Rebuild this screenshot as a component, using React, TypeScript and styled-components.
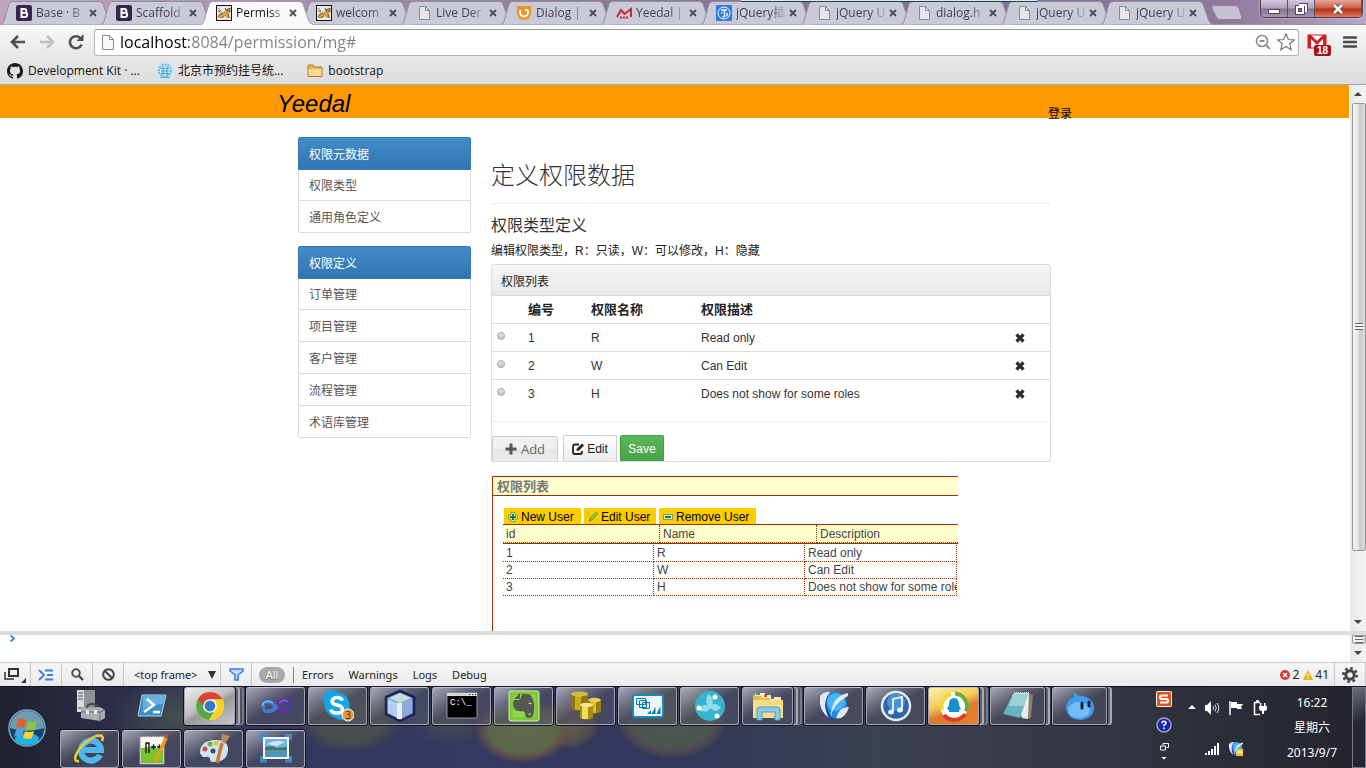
import React from "react";
import styled, { createGlobalStyle, css } from "styled-components";

const ui = `"Open Sans", "Noto Sans CJK SC", sans-serif`;
const body = `"Liberation Sans", "Noto Sans CJK SC", sans-serif`;

const GlobalStyle = createGlobalStyle`
  * { box-sizing: border-box; }
  body { margin: 0; font-family: ${body}; font-size: 12px; color: #333; background: #fff; }
  button, input, select { font: inherit; color: inherit; margin: 0; }
  button { padding: 0; border: 0; background: none; cursor: pointer; }
  a { color: inherit; text-decoration: none; }
  svg { display: block; flex: none; }
  h1, h2, p, ul { margin: 0; padding: 0; }
  ul { list-style: none; }
`;

const Screen = styled.div`
  display: flex;
  flex-direction: column;
  height: 100vh;
  overflow: hidden;
`;

/* ---------- tab strip ---------- */

const TabStrip = styled.header`
  position: relative;
  display: flex;
  flex: none;
  height: 25px;
  padding-left: 1px;
  background: linear-gradient(90deg, #c0a5c0 0, #a893ab 20%, #8d7896 45%, #836f90 70%, #8f7a9f 90%, #b9a5c6 100%);
  border-bottom: 1px solid #9a97a2;
  font-family: ${ui};
`;
const BackWindowEdge = styled.span`
  position: absolute;
  left: 741px;
  top: 0;
  width: 296px;
  height: 2px;
  background: linear-gradient(#dfe7e8 50%, #1f4650 50%);
  z-index: 4;
`;
const TabBox = styled.div<{ $active?: boolean }>`
  position: relative;
  z-index: ${(p) => (p.$active ? 3 : 1)};
  display: flex;
  align-items: center;
  flex: 0 1 100px;
  min-width: 0;
  height: 25px;
  padding: 1px 0 0 15px;
  color: ${(p) => (p.$active ? "#111" : "#45434f")};
`;
const TabShape = styled.svg`
  position: absolute;
  left: 0;
  top: 0;
  z-index: -1;
`;
const TabButton = styled.button`
  display: flex;
  align-items: center;
  gap: 4px;
  font-size: 12px;
  line-height: 20px;
`;
const TabTitle = styled.span`
  width: 51px;
  overflow: hidden;
  white-space: nowrap;
  text-align: left;
  mask-image: linear-gradient(90deg, #000 34px, transparent 52px);
`;
const CloseTab = styled.button`
  margin-left: 2px;
  width: 8px;
  height: 8px;
`;
const NewTab = styled.button`
  width: 32px;
  height: 16px;
  margin: 5px 0 0 10px;
`;
const WindowControls = styled.div`
  display: flex;
  height: 18px;
  margin: 0 3px 0 auto;
  border: 1px solid #4a4058;
  border-top: 0;
  border-radius: 0 0 5px 5px;
  overflow: hidden;
  box-shadow: 0 0 2px #ffffffaa;
`;
const WindowButton = styled.button<{ $close?: boolean }>`
  display: flex;
  align-items: center;
  justify-content: center;
  width: ${(p) => (p.$close ? 47 : 27)}px;
  border-right: 1px solid #5d526b;
  background: ${(p) =>
    p.$close
      ? "linear-gradient(#e3a797 0, #cf5a43 48%, #b42d16 52%, #dd7a58 100%)"
      : "linear-gradient(#d6c9dc 0, #b1a0bb 48%, #85738f 52%, #a595b0 100%)"};
`;

/* ---------- toolbar ---------- */

const Toolbar = styled.div`
  display: flex;
  align-items: center;
  flex: none;
  height: 34px;
  padding: 0 7px 0 8px;
  background: linear-gradient(#f9f9f9, #e6e6e6);
`;
const ToolButton = styled.button<{ $w: number }>`
  display: flex;
  align-items: center;
  justify-content: center;
  width: ${(p) => p.$w}px;
  height: 26px;
`;
const Omnibox = styled.div`
  display: flex;
  align-items: center;
  flex: 1;
  height: 27px;
  margin-left: 1px;
  padding: 0 3px 0 7px;
  gap: 6px;
  background: #fff;
  border: 1px solid #b5b5b5;
  border-top-color: #9c9c9c;
  border-radius: 3px;
`;
const UrlInput = styled.input`
  flex: 1;
  min-width: 0;
  height: 24px;
  padding: 0;
  border: 0;
  outline: 0;
  font-family: ${ui};
  font-size: 16px;
  color: #808080;
  background: linear-gradient(90deg, #000 69px, #808080 69px);
  background-clip: text;
  -webkit-text-fill-color: transparent;
`;
const Gmail = styled.button`
  display: flex;
  margin: 6px 8px 0;
`;
const Bookmarks = styled.nav`
  display: flex;
  align-items: center;
  flex: none;
  height: 26px;
  gap: 17px;
  padding: 0 7px 2px;
  background: linear-gradient(#e6e6e6, #dcdcdc);
  border-bottom: 1px solid #a5a5a5;
  font-family: ${ui};
  color: #111;
`;
const Bookmark = styled.a<{ $gap?: boolean }>`
  display: flex;
  align-items: center;
  gap: 5px;
  margin-left: ${(p) => (p.$gap ? 7 : 0)}px;
  line-height: 20px;
`;

/* ---------- page ---------- */

const Viewport = styled.div`
  display: flex;
  flex: 1;
  min-height: 0;
`;
const Page = styled.div`
  flex: 1;
  min-width: 0;
  overflow: hidden;
`;
const Banner = styled.div`
  height: 33px;
  background: #f90;
`;
const BannerInner = styled.div`
  display: flex;
  justify-content: space-between;
  max-width: 795px;
  margin: 0 auto;
  color: #000;
`;
const Brand = styled.a`
  font-size: 24px;
  font-style: italic;
  line-height: 37px;
`;
const Login = styled.a`
  line-height: 18px;
  padding-top: 20px;
`;
const Container = styled.div`
  display: flex;
  gap: 20px;
  max-width: 753px;
  margin: 0 auto;
  padding-top: 19px;
`;
const Sidebar = styled.nav`
  flex: 0 0 173px;
`;
const MenuGroup = styled.ul`
  margin-bottom: 13px;
`;
const MenuHead = styled.li`
  position: relative;
  height: 33px;
  padding: 0 10px;
  line-height: 34px;
  color: #fff;
  background: linear-gradient(#428bca, #3276b1);
  border: 1px solid #3278b3;
  border-radius: 2px 2px 0 0;
  margin-bottom: -1px;
`;
const MenuItem = styled.li`
  height: 32px;
  padding: 0 10px;
  line-height: 34px;
  color: #555;
  border: solid #ddd;
  border-width: 0 1px 1px;
  &:last-child {
    border-radius: 0 0 2px 2px;
  }
`;
const Main = styled.main`
  flex: 1;
  min-width: 0;
`;
const Title = styled.h1`
  padding: 20px 0 9px;
  font-size: 24px;
  font-weight: 300;
  line-height: 37px;
  border-bottom: 1px solid #eee;
`;
const Subtitle = styled.h2`
  padding-top: 10px;
  font-size: 16px;
  font-weight: 400;
  line-height: 24px;
`;
const Hint = styled.p`
  line-height: 20px;
  margin: 3px 0;
  color: #222;
`;
const Panel = styled.section`
  border: 1px solid #ddd;
  border-radius: 2px;
`;
const PanelHead = styled.div`
  height: 31px;
  padding: 0 9px;
  line-height: 35px;
  color: #222;
  background: linear-gradient(#f5f5f5, #e8e8e8);
  border-bottom: 1px solid #ddd;
`;
const RoleTable = styled.table`
  width: 100%;
  table-layout: fixed;
  border-collapse: collapse;
  th,
  td {
    height: 28px;
    padding: 2px 5px 0;
    text-align: left;
    line-height: 18px;
  }
  th {
    height: 27px;
    font-size: 13px;
    color: #222;
  }
  tbody tr {
    border-top: 1px solid #ddd;
  }
`;
const Col = styled.col<{ $w?: number }>`
  width: ${(p) => (p.$w ? `${p.$w}px` : "auto")};
`;
const Radio = styled.input`
  display: block;
  appearance: none;
  width: 8px;
  height: 8px;
  border: 1px solid #aaa;
  border-radius: 50%;
  background: linear-gradient(#e6e6e6, #c4c4c4);
  margin-bottom: 4px;
`;
const DeleteButton = styled.button`
  display: block;
`;
const PanelFoot = styled.div`
  display: flex;
  align-items: flex-end;
  gap: 3px;
  height: 40px;
  margin-top: 14px;
  border-top: 1px solid #eee;
`;
const Button = styled.button<{ $kind?: "add" | "save" }>`
  display: flex;
  align-items: center;
  justify-content: center;
  gap: 3px;
  height: 26px;
  width: 54px;
  border: 1px solid #ccc;
  border-bottom: 0;
  border-radius: 2px 2px 0 0;
  color: #222;
  background: linear-gradient(#fff, #ebebeb);
  ${(p) =>
    p.$kind === "add" &&
    css`
      width: 66px;
      height: 25px;
      gap: 4px;
      margin-right: 2px;
      font-family: ${ui};
      font-size: 13px;
      color: #666;
      background: linear-gradient(#f0f0f0 50%, #e6e6e6 50%, #ececec);
    `}
  ${(p) =>
    p.$kind === "save" &&
    css`
      width: 44px;
      color: #fff;
      border-color: #449d44;
      background: linear-gradient(#5cb85c, #47a147);
    `}
`;

const GridPanel = styled.section`
  max-width: 466px;
  height: 300px;
  margin: 14px 0 0 1px;
  overflow: hidden;
  border: solid #930;
  border-width: 1px 0 0 1px;
`;
const GridTitle = styled.h2`
  height: 19px;
  padding-left: 4px;
  font-size: 13px;
  font-weight: 700;
  line-height: 19px;
  color: #777;
  background: #ffc;
  border-bottom: 1px solid #930;
`;
const GridInner = styled.div`
  padding: 12px 0 0 10px;
`;
const GridToolbar = styled.div`
  display: flex;
  gap: 3px;
  padding-left: 1px;
`;
const GridButton = styled.button<{ $w: number }>`
  display: flex;
  align-items: center;
  gap: 3px;
  width: ${(p) => p.$w}px;
  height: 16px;
  padding: 1px 0 0 4px;
  color: #000;
  background: #fc0;
  white-space: nowrap;
`;
const GridHeadTable = styled.table`
  width: 471px;
  margin-bottom: 1px;
  table-layout: fixed;
  border-collapse: separate;
  border-spacing: 0;
  background: #ffc;
  border: solid #930;
  border-width: 1px 0;
  th {
    height: 18px;
    padding: 0 3px;
    font-weight: 400;
    text-align: left;
    line-height: 16px;
    color: #444;
    border: dotted #930;
    border-width: 0 1px 1px 0;
  }
`;
const GridBodyTable = styled.table`
  width: 454px;
  table-layout: fixed;
  border-collapse: separate;
  border-spacing: 0;
  td {
    height: 17px;
    padding: 0 3px;
    line-height: 16px;
    color: #444;
    white-space: nowrap;
    overflow: hidden;
    border: dotted #930;
    border-width: 0 1px 1px 0;
  }
`;

/* ---------- scrollbars ---------- */

const Scrollbar = styled.div`
  display: flex;
  flex-direction: column;
  align-items: center;
  flex: none;
  width: 17px;
  background: linear-gradient(90deg, #fff 1px, #e8e8e8 1px, #f3f3f3);
`;
const ScrollArrow = styled.span<{ $down?: boolean }>`
  display: flex;
  align-items: center;
  justify-content: center;
  height: 18px;
  &::after {
    content: "";
    border: 4px solid transparent;
    border-width: ${(p) => (p.$down ? "4px 4px 0" : "0 4px 4px")};
    border-top-color: ${(p) => (p.$down ? "#444" : "transparent")};
    border-bottom-color: ${(p) => (p.$down ? "transparent" : "#444")};
  }
`;
const Thumb = styled.span<{ $short?: boolean }>`
  display: flex;
  align-items: center;
  justify-content: center;
  width: 14px;
  margin-left: 2px;
  flex: ${(p) => (p.$short ? "0 0 9px" : "0 0 82%")};
  border: 1px solid #999;
  border-radius: ${(p) => (p.$short ? "0 0 2px 2px" : "2px")};
  background: linear-gradient(90deg, #f5f5f5, #e4e4e4 45%, #c9c9c9 55%, #dadada);
  &::after {
    content: "";
    width: 8px;
    height: 7px;
    background: repeating-linear-gradient(#666 0 1px, #f4f4f4 1px 3px);
  }
`;
const Grow = styled.span`
  flex: 1;
`;

/* ---------- console ---------- */

const Console = styled.div`
  display: flex;
  flex: none;
  height: 31px;
  border-top: 4px solid #dcdcdc;
  background: #fff;
`;
const Prompt = styled.div`
  flex: 1;
  padding-left: 10px;
`;
const ConsoleBar = styled.div`
  display: flex;
  flex: none;
  height: 24px;
  border-top: 1px solid #c8c8c8;
  background: linear-gradient(#f6f6f6, #eaeaea);
  font-family: "Noto Sans", sans-serif;
  font-size: 11px;
  color: #222;
`;
const ConsoleTool = styled.button`
  display: flex;
  align-items: center;
  justify-content: center;
  width: 31px;
  border-right: 1px solid #c8c8c8;
`;
const FrameSelect = styled.label`
  position: relative;
  display: flex;
  align-items: center;
  width: 97px;
  border-right: 1px solid #c8c8c8;
  select {
    appearance: none;
    width: 96px;
    height: 22px;
    padding: 0 0 0 10px;
    border: 0;
    background: none;
  }
  svg {
    position: absolute;
    right: 4px;
  }
`;
const Filters = styled.div`
  display: flex;
  align-items: center;
  gap: 15px;
  padding-left: 7px;
`;
const AllFilter = styled.button`
  width: 26px;
  height: 16px;
  margin-right: -7px;
  border-radius: 8px;
  line-height: 16px;
  color: #fff;
  background: #a9a9a9;
  text-shadow: 0 1px 1px #666;
`;
const FilterRule = styled.span`
  width: 1px;
  height: 16px;
  margin-right: -7px;
  background: #888;
`;
const Counts = styled.div`
  display: flex;
  align-items: center;
  gap: 2px;
  margin-left: auto;
  padding-right: 5px;
  font-size: 12px;
  border-right: 1px solid #c8c8c8;
`;
const CountText = styled.span`
  margin-right: 2px;
  &:last-child { margin-right: 0; }
`;

/* ---------- taskbar ---------- */

const Taskbar = styled.footer`
  display: flex;
  flex: none;
  height: 82px;
  border-top: 1px solid #15151f;
  color: #fff;
  background:
    radial-gradient(ellipse 48px 32px at 523px 44px, #5f6b4b 0, #5c6649 70%, #6b5148aa 86%, transparent 100%),
    radial-gradient(ellipse 30px 26px at 570px 36px, #63604c 0, #625549aa 75%, transparent 100%),
    radial-gradient(ellipse 56px 42px at 672px 30px, #4c5750 0, #4b5550 72%, #5a4c50aa 88%, transparent 100%),
    radial-gradient(ellipse 52px 36px at 350px 30px, #464f4c 0, #474d4d 70%, transparent 100%),
    radial-gradient(ellipse 40px 24px at 450px 34px, #454f50 0, transparent 100%),
    radial-gradient(ellipse 70px 40px at 180px 30px, #454f4c 0, transparent 100%),
    linear-gradient(90deg, #1f2130 0, #34375a 14%, #363960 35%, #33375a 50%, #3c4152 65%, #343643 80%, #23242d 100%);
`;
const StartButton = styled.button`
  display: flex;
  align-items: center;
  justify-content: center;
  flex: 0 0 54px;
`;
const Tasks = styled.div`
  display: grid;
  grid-template-columns: repeat(17, 59px);
  grid-template-rows: 38px 38px;
  gap: 5px 3px;
  margin-left: 6px;
  align-content: start;
`;
type Look = "plain" | "bare" | "bright" | "orange";
const TaskButton = styled.button<{ $look: Look; $stack: number }>`
  display: flex;
  align-items: center;
  justify-content: center;
  height: 38px;
  width: ${(p) => [59, 55, 51][p.$stack]}px;
  border-radius: 3px;
  ${(p) =>
    p.$look !== "bare" &&
    css`
      border: 1px solid #a3a4b2;
      border-top-color: #c4c4d0;
      box-shadow: 0 0 0 1px #14141d${p.$stack > 0 ? ", 4px 0 0 -1px #60636f, 5px 0 0 0 #a9aab6" : ""}${p.$stack > 1 ? ", 8px 0 0 -1px #50535f, 9px 0 0 0 #777987" : ""};
      background: ${p.$look === "orange"
        ? "linear-gradient(160deg, #f8f0a8 0, #f3cd58 40%, #dd7a2a 60%, #e8812c 100%)"
        : p.$look === "bright"
          ? "linear-gradient(150deg, #efeff1 0, #bdbdc0 45%, #999a9a 55%, #c8c8c8 100%)"
          : "linear-gradient(150deg, #c2c3cecc 0, #7a7c8caa 32%, #4f526499 50%, #53566888 100%)"};
    `}
`;
const Tray = styled.div`
  display: flex;
  margin-left: auto;
  font-family: "Noto Sans", "Noto Sans CJK SC", sans-serif;
`;
const TrayColumn = styled.div`
  display: flex;
  flex-direction: column;
  align-items: center;
  gap: 10px;
  width: 16px;
  padding-top: 4px;
`;
const TrayGrid = styled.div`
  display: grid;
  grid-template-columns: 16px 24px 24px 24px;
  grid-template-rows: 41px 41px;
  align-items: center;
  justify-items: center;
  margin-left: 12px;
`;
const Clock = styled.div`
  width: 80px;
  padding-top: 3px;
  text-align: center;
  font-size: 12px;
  line-height: 25px;
`;
const ShowDesktop = styled.button`
  width: 14px;
  border: 1px solid #777a86;
  background: linear-gradient(150deg, #6c6e79, #25262f 45%);
`;

/* ---------- icons ---------- */

const PageIcon = () => (
  <svg width="16" height="16" viewBox="0 0 16 16">
    <path d="M3.500 1.500h6l4 4v9h-10z" fill="#e6e5ea" stroke="#8a8a92" />
    <path d="M9.500 1.500v4h4" fill="none" stroke="#8a8a92" />
  </svg>
);
const BootstrapIcon = () => (
  <svg width="16" height="16" viewBox="0 0 16 16">
    <rect width="16" height="16" rx="2" fill="#35264f" />
    <path d="M5.500 4h3.200a2 2 0 0 1 .6 3.800a2.100 2.100 0 0 1-.5 4.200h-3.300zM5.500 7.800h3" fill="none" stroke="#fff" strokeWidth="2" />
  </svg>
);
const TomcatIcon = () => (
  <svg width="16" height="16" viewBox="0 0 16 16">
    <rect x=".5" y=".5" width="15" height="15" fill="#ece9e4" stroke="#111" />
    <path d="M2 13l1-4 3-1 3-2V3l2 1 3-1v4l-1 2 1 4h-3l-2-2-3 2z" fill="#d3a04a" />
    <path d="M2 3l3 3M2 6l3 1M2 12q2-4 5-4M9 3l1 2 2-1 2-1v4M12 9l1 4M8 11l-3 2" stroke="#5c4a2e" strokeWidth=".8" fill="none" />
    <path d="M10.500 6h.8M12.500 6h.8" stroke="#222" />
  </svg>
);
const DialogIcon = () => (
  <svg width="16" height="16" viewBox="0 0 16 16">
    <path d="M1 1h14v7c0 4-3 7-7 7s-7-3-7-7z" fill="#ef9422" />
    <path d="M4 5v2.500a4 4 0 0 0 8 0V5M9 5h3" fill="none" stroke="#fff" strokeWidth="2" />
  </svg>
);
const YeedalIcon = () => (
  <svg width="16" height="16" viewBox="0 0 16 16">
    <path d="M1 12L5 5l3.500 4L15 4v8" fill="none" stroke="#c8283c" strokeWidth="2" />
    <path d="M4 12.500h9" stroke="#c8283c" strokeWidth="2" strokeDasharray="2 1" />
  </svg>
);
const JqIcon = () => (
  <svg width="16" height="16" viewBox="0 0 16 16">
    <rect width="16" height="16" rx="1" fill="#2f7be6" />
    <circle cx="8" cy="8" r="6" fill="none" stroke="#fff" />
    <path d="M5 5h6M8.500 5v5q0 2-2 2M5 8h1.500M10.500 8q2 2-1 3.500" fill="none" stroke="#fff" strokeWidth="1.300" />
  </svg>
);
const CrossIcon = () => (
  <svg width="8" height="8" viewBox="0 0 8 8">
    <path d="M1 1l6 6M7 1L1 7" stroke="#4c4a55" strokeWidth="1.800" />
  </svg>
);
const GithubIcon = () => (
  <svg width="16" height="16" viewBox="0 0 16 16">
    <path fill="#1b1817" d="M8 0C3.580 0 0 3.580 0 8c0 3.540 2.290 6.530 5.470 7.590.4.070.55-.17.55-.38 0-.19-.01-.82-.01-1.490-2.010.37-2.530-.49-2.690-.94-.09-.23-.48-.94-.82-1.130-.28-.15-.68-.52-.01-.53.63-.01 1.080.58 1.230.82.72 1.210 1.870.87 2.330.66.07-.52.28-.87.51-1.070-1.780-.2-3.640-.89-3.640-3.950 0-.87.31-1.590.82-2.150-.08-.2-.36-1.020.08-2.120 0 0 .67-.21 2.200.82.64-.18 1.320-.27 2-.27s1.360.09 2 .27c1.530-1.040 2.200-.82 2.200-.82.44 1.100.16 1.920.08 2.120.51.56.82 1.270.82 2.150 0 3.070-1.870 3.750-3.650 3.950.29.25.54.73.54 1.480 0 1.070-.01 1.930-.01 2.200 0 .21.15.46.55.38A8.010 8.010 0 0 0 16 8c0-4.420-3.580-8-8-8z" />
  </svg>
);
const HospitalIcon = () => (
  <svg width="16" height="16" viewBox="0 0 16 16">
    <rect width="16" height="16" fill="#cdeaf5" />
    <circle cx="8" cy="7.500" r="6" fill="none" stroke="#6cb8d8" strokeWidth="2" strokeDasharray="2 1" />
    <path d="M6 3v9M10 3v9M4 5.500h8M4 8h8M4 10.500h8M3 14.500h10" stroke="#4ba3cc" />
  </svg>
);
const FolderIcon = () => (
  <svg width="16" height="16" viewBox="0 0 16 16">
    <path d="M1 13.500V3q0-1 1-1h4l1.500 2H14q1 0 1 1v8.500z" fill="#e9b252" stroke="#a87828" />
    <path d="M1.500 6h13v7h-13z" fill="#fbd98f" />
  </svg>
);
const Win = ({ kind }: { kind: string }) => (
  <svg width="14" height="14" viewBox="0 0 14 14" fill="none" stroke="#fff" strokeWidth="2">
    {kind === "min" && <><rect x="1.500" y="7.500" width="11" height="4" stroke="#50465c" strokeWidth="1" /><path d="M2 9.500h10" strokeWidth="3" /></>}
    {kind === "max" && <><path d="M5 3h7v7M3 5h6v6H3z" stroke="#50465c" strokeWidth="4" /><path d="M5 3h7v7M3 5h6v6H3z" /></>}
    {kind === "close" && <><path d="M3 3l8 8M11 3l-8 8" stroke="#5b3a3a" strokeWidth="4.500" /><path d="M3 3l8 8M11 3l-8 8" strokeWidth="2.600" /></>}
  </svg>
);

/* Taskbar program icons, drawn in a 32 unit box. */
const art: Record<string, React.ReactNode> = {
  server: (
    <>
      <path d="M3 0h18v22H3z" fill="#8f9294" /><path d="M3 0h7v22H3z" fill="#d9dcdd" />
      <path d="M4 3h5M4 6h5M4 9h5M4 18h5" stroke="#55585a" />
      <path d="M13 18q0-4 5-4t5 4" fill="none" stroke="#464a4c" strokeWidth="2" />
      <path d="M7 18l19-1 5 3v8l-5 3L7 28z" fill="#a9adaf" /><path d="M7 22h19l5-2M26 22v9" stroke="#65696b" fill="none" /><path d="M12 20h3v4h-3zM20 20h3v4h-3z" fill="#e6e8e9" />
    </>
  ),
  powershell: (
    <>
      <path d="M6 5h24l-5 21H2z" fill="#3c8fc4" stroke="#a8d6ee" /><path d="M7 6h22l-2 8q-12 0-20 6z" fill="#68b1dc" />
      <path d="M11 9l7 6-10 7M17 22h7" fill="none" stroke="#fff" strokeWidth="2.500" />
    </>
  ),
  chrome: (
    <>
      <circle cx="16" cy="16" r="14" fill="#fbd02b" />
      <path d="M3.900 9A14 14 0 0 0 15 30l7-11-6-3z" fill="#57a84c" />
      <path d="M16 9h12.200A14 14 0 0 1 15 30l7-11z" fill="#fbd02b" />
      <path d="M3.900 9A14 14 0 0 1 28.200 9H16l-6 8z" fill="#dd4334" />
      <circle cx="16" cy="16" r="6.800" fill="#fff" /><circle cx="16" cy="16" r="5.400" fill="#3577c8" />
    </>
  ),
  vs: (
    <>
      <path d="M16 17C12 11 3 9 3 16s9 7 14 0 12-8 12-1-8 8-13 2" fill="none" stroke="#5b32a8" strokeWidth="4" />
      <path d="M16 17C12 11 3 9 3 16s9 7 14 0" fill="none" stroke="#3c7cc4" strokeWidth="4" />
      <path d="M13 13C9 10 3 11 2.500 16" fill="none" stroke="#79bce8" strokeWidth="1.500" /><path d="M19 13q5-5 9-1" fill="none" stroke="#8a5fd0" strokeWidth="1.500" />
    </>
  ),
  skype: (
    <>
      <circle cx="10" cy="9" r="9" fill="#12a5e8" /><circle cx="19" cy="21" r="9" fill="#12a5e8" /><circle cx="15" cy="15" r="12.500" fill="#12a5e8" />
      <path d="M20.500 10.500Q19 7.500 15 7.500t-5 3.500q0 3 5 4t5.500 4q0 4-5.500 4t-6-3.500" fill="none" stroke="#fff" strokeWidth="3.500" />
      <circle cx="26" cy="25" r="6" fill="#f2992e" stroke="#fff" />
      <text x="26" y="29" fontSize="10" textAnchor="middle" fill="#222" fontFamily="Open Sans, sans-serif">3</text>
    </>
  ),
  cube: (
    <>
      <path d="M16 1l14 6v17l-14 7-14-7V7z" fill="#7f9fce" stroke="#1d2252" strokeWidth="2.500" />
      <path d="M16 3l11 5-11 5L5 8z" fill="#c4ddd6" /><path d="M4 9l11 5v14L4 23z" fill="#b3cdf3" /><path d="M28 9l-12 5v14l12-6z" fill="#8daadd" /><path d="M13 13h5v16h-5z" fill="#e7f1fc" />
    </>
  ),
  cmd: (
    <>
      <path d="M1 3h30v25H1z" fill="#000" stroke="#999" /><path d="M1 3h30v3H1z" fill="#d4d6da" /><path d="M23 4.500h1m2 0h1m2 0h1" stroke="#333" />
      <text x="4" y="15" fontSize="9" fill="#fff" fontFamily="Liberation Mono, monospace">C:\_</text>
    </>
  ),
  evernote: (
    <>
      <rect x="1" y="1" width="30" height="30" rx="2" fill="#7cc93a" stroke="#d4f0a5" />
      <path d="M5 5h22v22H5z" fill="#a5e060" opacity=".5" />
      <path d="M6 9l6-6v5q0 1-1 1z" fill="#555952" />
      <path d="M14 4q7-1 10 3 3 6 2 14 0 7-5 7-4 0-4-4t4-3q2 0 2 2l-2 .5q-1 .5-.5 1.500 2 1 2.500-2-1-3-4-2-2 3-4 0-7 1-9-3-2-5 0-8h5q2-1 2-3z" fill="#555952" />
      <path d="M20 13q3-1 4 1-2 1-4-1" fill="#c8e8a0" />
    </>
  ),
  database: (
    <>
      <path d="M1 4h17v15q-8 3-17 0z" fill="#8f7410" /><path d="M5 4h6v16H5z" fill="#c9ab22" /><ellipse cx="9.500" cy="4" rx="8.500" ry="2.500" fill="#d8bd3c" />
      <path d="M18 10h13v12q-6 3-13 0z" fill="#9a7e12" /><path d="M21 10h5v13h-5z" fill="#d9bb2c" /><ellipse cx="24.500" cy="10" rx="6.500" ry="2.200" fill="#e6cf58" />
      <path d="M10 15h13v13q-6 3-13 0z" fill="#a88c16" /><path d="M12 15h6v14h-6z" fill="#f0dd60" /><ellipse cx="16.500" cy="15" rx="6.500" ry="2.200" fill="#f5e88c" />
    </>
  ),
  vm: (
    <>
      <rect x="1" y="5" width="30" height="22" rx="2" fill="#eef6f9" stroke="#1789ba" strokeWidth="2" />
      <path d="M4.500 8.500h9v6h-9zM7.500 10.500h7v7h-7zM10.500 12.500h7v6h-7z" fill="#d5edf6" stroke="#1179aa" />
      <path d="M15 24l4-4v4zM19.500 24l4-7v7zM24.500 24l4-8v8z" fill="#1179aa" />
    </>
  ),
  hub: (
    <>
      <circle cx="16" cy="16" r="15" fill="#37b2cf" />
      <path d="M14 4q8 5 3 13-8-4-3-13M5 20q4-8 12-4-2 9-12 4M27 18q-7 7-12-2 7-5 12 2" fill="#8fdbea" />
      <circle cx="21" cy="7" r="2.500" fill="#fff" /><circle cx="5" cy="18" r="2.500" fill="#fff" /><circle cx="23" cy="26" r="2.500" fill="#fff" />
    </>
  ),
  explorer: (
    <>
      <path d="M1 5h10l2 2h16v20H1z" fill="#e3bc58" /><path d="M3 3h10v3H3zM10 5h9v3h-9zM18 7h11v3H18z" fill="#f7ecc0" /><path d="M4 3h4v2H4z" fill="#3ca03c" /><path d="M12 5h3v2h-3z" fill="#d04030" /><path d="M19 7h3v2h-3z" fill="#3478c8" />
      <path d="M1 10h30v18H1z" fill="#f5dd86" /><path d="M5 30V20q0-3 3-3h17q3 0 3 3v10h-5v-8H10v8z" fill="#8ccbe6" stroke="#4a9cc4" />
    </>
  ),
  globe: (
    <>
      <circle cx="16" cy="15" r="13" fill="#1c8be0" /><circle cx="18" cy="12" r="9" fill="#47b4f4" />
      <path d="M1 7q0 14 8 20 4 3 8 3Q4 20 11 3 5 3 1 7z" fill="#1838a8" />
      <path d="M2 6q5-5 10-4Q3 14 11 28 0 20 2 6zM30 3q-11 2-15 12-3 8-2 14Q13 15 30 6zM31 17q-9-1-13 11 9 2 13-11z" fill="#e4e6ea" />
    </>
  ),
  itunes: (
    <>
      <circle cx="16" cy="16" r="14" fill="#2a66a8" stroke="#e6e8ea" strokeWidth="2.500" /><circle cx="16" cy="12" r="9" fill="#4b92d0" />
      <path d="M13 22V9l9-2v13" fill="none" stroke="#e8eaec" strokeWidth="2" /><ellipse cx="11" cy="22" rx="3" ry="2.500" fill="#e8eaec" /><ellipse cx="20" cy="20" rx="3" ry="2.500" fill="#e8eaec" />
    </>
  ),
  qq: (
    <>
      <circle cx="16" cy="16" r="14" fill="#fff" />
      <path d="M4 20A13 13 0 0 1 13 4" fill="none" stroke="#f3d73c" strokeWidth="4" /><path d="M17 3.500a13 13 0 0 1 11 18" fill="none" stroke="#6dac3c" strokeWidth="4" /><path d="M27 24a13 13 0 0 1-21 1" fill="none" stroke="#dd3b28" strokeWidth="4" />
      <path d="M16 8q5 0 5 7l2 4-2 1v2H11v-2l-2-1 2-4q0-7 5-7z" fill="#1690cb" />
    </>
  ),
  notepad: (
    <>
      <path d="M24 3l7 2-2 23-5 1z" fill="#8b7e66" /><path d="M12 3h15l-1 26-6-1z" fill="#e7eced" />
      <path d="M11 4h15l-8 24L1 24z" fill="#67b3bf" /><path d="M11 4h15l-4 12H7z" fill="#9bd2d8" /><path d="M12 3h15" stroke="#ddd" strokeWidth="2" strokeDasharray="1 1" />
    </>
  ),
  droplet: (
    <>
      <path d="M9 1q3 5 9 5 12 2 12 12T16 30Q3 29 2 18 2 10 10 7z" fill="#3c9cf0" /><ellipse cx="15" cy="20" rx="11" ry="8" fill="#8ccbf8" opacity=".7" />
      <path d="M18 13v5M25 12v4" stroke="#12233c" strokeWidth="3" strokeLinecap="round" />
    </>
  ),
  ie: (
    <>
      <path d="M26 22A10 10 0 1 1 27 17H10" fill="none" stroke="#4db8ee" strokeWidth="6" />
      <path d="M5 28C-4 30 4 14 15 7 25 0 31 2 28 8" fill="none" stroke="#f5c92c" strokeWidth="2.600" />
    </>
  ),
  npp: (
    <>
      <path d="M4 3h24v28H4z" fill="#f6f6f2" stroke="#999" /><path d="M5 15q12-2 22 2v13H5z" fill="#76c52d" /><path d="M5 3h22" stroke="#555" strokeWidth="2" strokeDasharray="1 1.500" />
      <path d="M10 20V10h3v10M15 14h5m-2.500-2.500v5M21 14h5m-2.500-2.500v5" fill="none" stroke="#111" strokeWidth="1.400" />
      <path d="M31 3L21 25l-2 3" stroke="#e7a024" strokeWidth="3.500" /><path d="M32 1l-2 4" stroke="#b84a4a" strokeWidth="4" />
    </>
  ),
  paint: (
    <>
      <path d="M2 20Q2 8 16 7q14-1 14 9 0 13-15 13-3 0-3-3t-4-2-6-4z" fill="#cfe4f2" /><circle cx="7" cy="16" r="2.500" fill="#d8503c" /><circle cx="12" cy="11" r="2.500" fill="#6eb043" /><circle cx="18" cy="10" r="2.500" fill="#eebb36" /><circle cx="15" cy="18" r="2.500" fill="#2b506e" />
      <path d="M24 10l-5 20" stroke="#d07831" strokeWidth="3.500" /><path d="M23 8l1-7 8 2-5 8z" fill="#b98d64" />
    </>
  ),
  photo: (
    <>
      <path d="M3 4h26v22H3z" fill="#f4f8fa" /><path d="M5 6h22v18H5z" fill="#6fb4e6" /><path d="M7 11q8-5 18-2l-8 4z" fill="#cfe6f6" /><path d="M5 14q7-2 12 1l10-1v4H5z" fill="#47755e" /><path d="M5 17h22v7H5z" fill="#4f97b4" />
      <path d="M1.500 7V2.500H7M25 2.500h5.500V7M30.500 23v5H25M7 28H1.500v-5" fill="none" stroke="#3c8bc8" strokeWidth="3" />
    </>
  ),
};
const Art = ({ name }: { name: string }) => (
  <svg width="32" height="32" viewBox="0 0 32 32">{art[name]}</svg>
);

/* ---------- data ---------- */

const tabs: [string, () => React.ReactElement][] = [
  ["Base · B", BootstrapIcon],
  ["Scaffold", BootstrapIcon],
  ["Permiss", TomcatIcon],
  ["welcom", TomcatIcon],
  ["Live Der", PageIcon],
  ["Dialog |", DialogIcon],
  ["Yeedal |", YeedalIcon],
  ["jQuery插", JqIcon],
  ["jQuery U", PageIcon],
  ["dialog.h", PageIcon],
  ["jQuery U", PageIcon],
  ["jQuery U", PageIcon],
];
const menus = [
  { head: "权限元数据", items: ["权限类型", "通用角色定义"] },
  { head: "权限定义", items: ["订单管理", "项目管理", "客户管理", "流程管理", "术语库管理"] },
];
const roles = [
  { id: 1, name: "R", description: "Read only" },
  { id: 2, name: "W", description: "Can Edit" },
  { id: 3, name: "H", description: "Does not show for some roles" },
];
const tasks: [string, Look, number][] = [
  ["server", "bare", 0], ["powershell", "bare", 0], ["chrome", "bright", 2], ["vs", "plain", 0],
  ["skype", "plain", 0], ["cube", "plain", 0], ["cmd", "plain", 0], ["evernote", "plain", 0],
  ["database", "plain", 0], ["vm", "plain", 0], ["hub", "plain", 0], ["explorer", "plain", 2],
  ["globe", "plain", 0], ["itunes", "plain", 0], ["qq", "orange", 2], ["notepad", "plain", 1],
  ["droplet", "plain", 1], ["ie", "plain", 0], ["npp", "plain", 0], ["paint", "plain", 0], ["photo", "plain", 0],
];

/* ---------- sections ---------- */

const Tabs = () => (
  <TabStrip>
    <BackWindowEdge />
    {tabs.map(([title, Icon], i) => {
      const active = i === 2;
      return (
        <TabBox key={i} $active={active}>
          <TabShape width="112" height="25" viewBox="0 0 112 25">
            <path
              d="M0 24.500Q2 24 3 21L8 4Q9 1.500 12 1.500H98Q101 1.500 102 4L108 21Q109 24 112 24.500"
              fill={active ? "#f9f9f9" : "#c9cad7"}
              stroke={active ? "#a29da8" : "#938ba0"}
            />
            {active && <path d="M1 24.500h110" stroke="#f9f9f9" />}
          </TabShape>
          <TabButton>
            <Icon />
            <TabTitle>{title}</TabTitle>
          </TabButton>
          <CloseTab aria-label="Close tab"><CrossIcon /></CloseTab>
        </TabBox>
      );
    })}
    <NewTab aria-label="New tab">
      <svg width="32" height="16" viewBox="0 0 32 16">
        <path d="M3 .5h21q3 0 4 3l3 9q0 2-2 2H9q-3 0-4-3L1 3Q.5.5 3 .5z" fill="#c6c2d2" stroke="#8d829c" />
      </svg>
    </NewTab>
    <WindowControls>
      <WindowButton aria-label="Minimize"><Win kind="min" /></WindowButton>
      <WindowButton aria-label="Restore"><Win kind="max" /></WindowButton>
      <WindowButton $close aria-label="Close"><Win kind="close" /></WindowButton>
    </WindowControls>
  </TabStrip>
);

const Navigation = () => (
  <>
    <Toolbar>
      <ToolButton $w={19} aria-label="Back">
        <svg width="16" height="14" viewBox="0 0 16 14"><path d="M15 7H3M8 1L2 7l6 6" fill="none" stroke="#505050" strokeWidth="2.600" /></svg>
      </ToolButton>
      <ToolButton $w={39} aria-label="Forward">
        <svg width="16" height="14" viewBox="0 0 16 14"><path d="M1 7h12M8 1l6 6-6 6" fill="none" stroke="#c0c0c0" strokeWidth="2.600" /></svg>
      </ToolButton>
      <ToolButton $w={19} aria-label="Reload">
        <svg width="16" height="16" viewBox="0 0 16 16"><path d="M13.500 10.500A6 6 0 1 1 12 3.800" fill="none" stroke="#505050" strokeWidth="2.600" /><path d="M15.500 0v7h-7z" fill="#505050" /></svg>
      </ToolButton>
      <ToolButton $w={8} as="span" />
      <Omnibox>
        <svg width="12" height="15" viewBox="0 0 12 15"><path d="M.5.500h7l4 4v10H.5zM7.500.500v4h4" fill="#fafafa" stroke="#8c8c8c" /></svg>
        <UrlInput aria-label="Address" defaultValue="localhost:8084/permission/mg#" />
        <svg width="16" height="16" viewBox="0 0 16 16"><circle cx="7" cy="7" r="5.500" fill="none" stroke="#8c8c8c" strokeWidth="1.600" /><path d="M4.500 7h5M11 11l4 4" stroke="#8c8c8c" strokeWidth="1.800" /></svg>
        <svg width="18" height="18" viewBox="0 0 18 18"><path d="M9 .8l2.300 5.700 6.100.4-4.700 3.900 1.500 6L9 13.500l-5.200 3.300 1.500-6L.6 6.900l6.100-.4z" fill="#fff" stroke="#777" strokeWidth="1.200" /></svg>
      </Omnibox>
      <Gmail aria-label="Gmail">
        <svg width="25" height="22" viewBox="0 0 25 22">
          <rect x="1" y="1" width="18" height="13" fill="#fff" stroke="#cf1f26" strokeWidth="1" /><path d="M1 1h3v13H1zM16 1h3v13h-3z" fill="#cf1f26" /><path d="M3 2l7 7 7-7" fill="none" stroke="#cf1f26" strokeWidth="3" />
          <rect x="7" y="11" width="17" height="11" rx="2" fill="#a50f1b" />
          <text x="15.500" y="20" fontSize="10" fontWeight="700" textAnchor="middle" fill="#fff" fontFamily="Liberation Sans, sans-serif">18</text>
        </svg>
      </Gmail>
      <ToolButton $w={19} aria-label="Menu">
        <svg width="14" height="14" viewBox="0 0 14 14"><path d="M1 2.500h12M1 7h12M1 11.500h12" stroke="#4a4a4a" strokeWidth="2.600" strokeLinecap="round" /></svg>
      </ToolButton>
    </Toolbar>
    <Bookmarks>
      <Bookmark href="#"><GithubIcon />Development Kit · ...</Bookmark>
      <Bookmark href="#"><HospitalIcon />北京市预约挂号统...</Bookmark>
      <Bookmark href="#" $gap><FolderIcon />bootstrap</Bookmark>
    </Bookmarks>
  </>
);

const RolePanel = () => (
  <Panel>
    <PanelHead>权限列表</PanelHead>
    <RoleTable>
      <colgroup>
        <Col $w={31} /><Col $w={63} /><Col $w={110} /><Col /><Col $w={40} />
      </colgroup>
      <thead>
        <tr><th /><th>编号</th><th>权限名称</th><th>权限描述</th><th /></tr>
      </thead>
      <tbody>
        {roles.map((r) => (
          <tr key={r.id}>
            <td><Radio type="radio" name="role" aria-label={r.name} /></td>
            <td>{r.id}</td>
            <td>{r.name}</td>
            <td>{r.description}</td>
            <td>
              <DeleteButton aria-label="Delete">
                <svg width="10" height="10" viewBox="0 0 10 10"><path d="M1.500 1.500l7 7M8.500 1.500l-7 7" stroke="#2a2f33" strokeWidth="3.200" /></svg>
              </DeleteButton>
            </td>
          </tr>
        ))}
      </tbody>
    </RoleTable>
    <PanelFoot>
      <Button $kind="add">
        <svg width="12" height="12" viewBox="0 0 12 12"><path d="M6 .5v11M.5 6h11" stroke="#555" strokeWidth="3" /></svg>
        Add
      </Button>
      <Button>
        <svg width="12" height="12" viewBox="0 0 12 12"><path d="M7 1.500H3Q1 1.500 1 3.500V9q0 2 2 2h5q2 0 2-2V8" fill="none" stroke="#222" strokeWidth="1.800" /><path d="M4.500 8l.5-2.500L10 .5 12 2.500 7 7.500z" fill="#222" /></svg>
        Edit
      </Button>
      <Button $kind="save">Save</Button>
    </PanelFoot>
  </Panel>
);

const UserGrid = () => (
  <GridPanel>
    <GridTitle>权限列表</GridTitle>
    <GridInner>
      <GridToolbar>
        <GridButton $w={77}>
          <svg width="10" height="10" viewBox="0 0 10 10"><path d="M3 .5h4V3h2.500v4H7v2.500H3V7H.5V3H3z" fill="#d7efc8" stroke="#7b9b6d" /><path d="M5 2v6M2 5h6" stroke="#16861c" strokeWidth="2" /></svg>
          New User
        </GridButton>
        <GridButton $w={72}>
          <svg width="10" height="10" viewBox="0 0 10 10"><path d="M1 9l1-3 6-6 2 2-6 6z" fill="#8ac53e" stroke="#5a8f24" strokeWidth=".6" /><path d="M1 9l1-2 1 1z" fill="#553" /></svg>
          Edit User
        </GridButton>
        <GridButton $w={97}>
          <svg width="10" height="10" viewBox="0 0 10 10"><rect x=".5" y="2.500" width="9" height="5" fill="#d7efc8" stroke="#7b9b8d" /><path d="M2 5h6" stroke="#16861c" strokeWidth="2" /></svg>
          Remove User
        </GridButton>
      </GridToolbar>
      <GridHeadTable>
        <thead><tr><th>id</th><th>Name</th><th>Description</th></tr></thead>
      </GridHeadTable>
      <GridBodyTable>
        <colgroup><Col $w={151} /><Col $w={151} /><Col $w={152} /></colgroup>
        <tbody>
          {roles.map((r) => (
            <tr key={r.id}><td>{r.id}</td><td>{r.name}</td><td>{r.description}</td></tr>
          ))}
        </tbody>
      </GridBodyTable>
    </GridInner>
  </GridPanel>
);

const DevTools = () => (
  <>
    <Console>
      <Prompt>
        <svg width="6" height="7" viewBox="0 0 6 7"><path d="M.5 0.500L4 3.500.5 6.500" fill="none" stroke="#3b7be0" strokeWidth="1.700" /></svg>
      </Prompt>
      <Scrollbar><Thumb $short /><ScrollArrow $down /></Scrollbar>
    </Console>
    <ConsoleBar>
      <ConsoleTool aria-label="Undock">
        <svg width="22" height="16" viewBox="0 0 22 16"><path d="M5 2h9v7H5z" fill="none" stroke="#333" strokeWidth="2" /><path d="M1 5v7h9" fill="none" stroke="#333" strokeWidth="1.500" /><path d="M22 11v5h-5z" fill="#333" /></svg>
      </ConsoleTool>
      <ConsoleTool aria-label="Console">
        <svg width="16" height="12" viewBox="0 0 16 12"><path d="M1 1l5 5-5 5M7 1.500h8M9 6h6M7 10.500h8" fill="none" stroke="#3b7be8" strokeWidth="1.800" /></svg>
      </ConsoleTool>
      <ConsoleTool aria-label="Search">
        <svg width="13" height="13" viewBox="0 0 13 13"><circle cx="5" cy="5" r="3.800" fill="none" stroke="#444" strokeWidth="1.800" /><path d="M8 8l4 4" stroke="#444" strokeWidth="2.400" /></svg>
      </ConsoleTool>
      <ConsoleTool aria-label="Clear">
        <svg width="13" height="13" viewBox="0 0 13 13"><circle cx="6.500" cy="6.500" r="5.300" fill="none" stroke="#444" strokeWidth="2" /><path d="M3 3l7 7" stroke="#444" strokeWidth="2" /></svg>
      </ConsoleTool>
      <FrameSelect>
        <select aria-label="Frame"><option>&lt;top frame&gt;</option></select>
        <svg width="8" height="8" viewBox="0 0 8 8"><path d="M0 0h8L4 8z" fill="#333" /></svg>
      </FrameSelect>
      <ConsoleTool aria-label="Filter">
        <svg width="15" height="13" viewBox="0 0 15 13"><path d="M1 1h13v2L9 7v5H6V7L1 3z" fill="#c6d9f8" stroke="#3b7be8" strokeWidth="1.500" /></svg>
      </ConsoleTool>
      <Filters>
        <AllFilter>All</AllFilter>
        <FilterRule />
        <button>Errors</button>
        <button>Warnings</button>
        <button>Logs</button>
        <button>Debug</button>
      </Filters>
      <Counts>
        <svg width="10" height="10" viewBox="0 0 10 10"><circle cx="5" cy="5" r="5" fill="#dc3838" /><path d="M3 3l4 4M7 3L3 7" stroke="#fff" strokeWidth="1.500" /></svg>
        <CountText>2</CountText>
        <svg width="10" height="10" viewBox="0 0 10 10"><path d="M5 0l5 10H0z" fill="#f0b400" /><path d="M5 3.500v3M5 7.500v1.300" stroke="#fff" strokeWidth="1.300" /></svg>
        <CountText>41</CountText>
      </Counts>
      <ConsoleTool aria-label="Settings">
        <svg width="16" height="16" viewBox="0 0 16 16"><circle cx="8" cy="8" r="4.200" fill="none" stroke="#444" strokeWidth="3" /><circle cx="8" cy="8" r="6.700" fill="none" stroke="#444" strokeWidth="2.600" strokeDasharray="2.630 2.630" /></svg>
      </ConsoleTool>
    </ConsoleBar>
  </>
);

const SystemTray = () => (
  <Tray>
    <TrayColumn>
      <svg width="16" height="16" viewBox="0 0 16 16"><rect x=".5" y=".5" width="15" height="15" rx="1" fill="#e94e1b" stroke="#fff" /><path d="M12 4.500H6Q4 4.500 4 6.200T6 8h4q2 0 2 1.700t-2 1.800H4" fill="none" stroke="#fff" strokeWidth="2.200" /></svg>
      <svg width="16" height="16" viewBox="0 0 16 16"><circle cx="8" cy="8" r="7" fill="#1322b8" stroke="#9fa6b8" strokeWidth="1.500" /><path d="M6 6.200q0-2 2-2t2 1.800q0 1.200-2 2.200v1M8 10.500v1.700" fill="none" stroke="#fff" strokeWidth="1.600" /></svg>
      <svg width="9" height="17" viewBox="0 0 9 17"><path d="M3 2.500V.500h5.500v4h-2M.5 3h5v4h-5z" fill="none" stroke="#fff" /><path d="M1.500 14h5L4 16.500z" fill="#fff" /></svg>
    </TrayColumn>
    <TrayGrid>
      <svg width="8" height="5" viewBox="0 0 8 5"><path d="M4 0l4 4H0z" fill="#fff" /></svg>
      <svg width="16" height="16" viewBox="0 0 16 16"><path d="M1 5h2l4-4v14l-4-4H1z" fill="#fff" /><path d="M9 6q1.500 2 0 4M11 4.500q2.500 3.500 0 7M13 3q3.500 5 0 10" fill="none" stroke="#ddd" /></svg>
      <svg width="16" height="16" viewBox="0 0 16 16"><path d="M2 1v14" stroke="#fff" strokeWidth="1.500" /><path d="M3 2h6v2h6l-2 3 1 2H9V8H3z" fill="#fff" /></svg>
      <svg width="16" height="16" viewBox="0 0 16 16"><path d="M8 14.500H2.500v-12H8M4 1h3" fill="none" stroke="#fff" strokeWidth="1.500" /><path d="M7 6h8v2q0 3-3 3v3h-2v-3q-3 0-3-3zM8 3h1.500v3H8zM12 3h1.500v3H12z" fill="#fff" /></svg>
      <span />
      <svg width="16" height="14" viewBox="0 0 16 14"><path d="M2 13v-2M5 13v-4M8 13V7M11 13V4M14 13V1" stroke="#fff" strokeWidth="2" /></svg>
      <svg width="16" height="16" viewBox="0 0 32 32">{art.globe}<path d="M16 16h14v14H16z" fill="#f3c63c" /><path d="M18 22h10" stroke="#fff" strokeWidth="3" /></svg>
      <span />
    </TrayGrid>
    <Clock>
      <div>16:22</div>
      <div>星期六</div>
      <div>2013/9/7</div>
    </Clock>
    <ShowDesktop aria-label="Show desktop" />
  </Tray>
);

export default function App() {
  return (
    <Screen>
      <GlobalStyle />
      <Tabs />
      <Navigation />
      <Viewport>
        <Page>
          <Banner>
            <BannerInner>
              <Brand href="#">Yeedal</Brand>
              <Login href="#">登录</Login>
            </BannerInner>
          </Banner>
          <Container>
            <Sidebar>
              {menus.map((m) => (
                <MenuGroup key={m.head}>
                  <MenuHead>{m.head}</MenuHead>
                  {m.items.map((t) => (
                    <MenuItem key={t}><a href="#">{t}</a></MenuItem>
                  ))}
                </MenuGroup>
              ))}
            </Sidebar>
            <Main>
              <Title>定义权限数据</Title>
              <Subtitle>权限类型定义</Subtitle>
              <Hint>编辑权限类型，R：只读，W：可以修改，H：隐藏</Hint>
              <RolePanel />
              <UserGrid />
            </Main>
          </Container>
        </Page>
        <Scrollbar>
          <ScrollArrow />
          <Thumb />
          <Grow />
          <ScrollArrow $down />
        </Scrollbar>
      </Viewport>
      <DevTools />
      <Taskbar>
        <StartButton aria-label="Start">
          <svg width="38" height="38" viewBox="0 0 38 38">
            <circle cx="19" cy="19" r="18" fill="#12456e" stroke="#7fa3b8" strokeWidth="1.500" />
            <path d="M2 19a17 17 0 0 1 34 0q-17 6-34 0z" fill="#6f9ab3" /><ellipse cx="19" cy="30" rx="12" ry="6" fill="#1fb0e6" />
            <path d="M10 11q4-3 8 0l-2 8q-4-2-8 0z" fill="#ea5a24" /><path d="M20 12q4 2 9 0l-2 8q-5 2-9 0z" fill="#8cc63e" /><path d="M8 21q4-2 8 0l-2 7q-4-2-8 0z" fill="#4aa4e4" /><path d="M17 22q4 2 9 0l-2 7q-4 2-9 0z" fill="#fcd22e" />
          </svg>
        </StartButton>
        <Tasks>
          {tasks.map(([name, look, stack]) => (
            <TaskButton key={name} $look={look} $stack={stack} aria-label={name}>
              <Art name={name} />
            </TaskButton>
          ))}
        </Tasks>
        <SystemTray />
      </Taskbar>
    </Screen>
  );
}
